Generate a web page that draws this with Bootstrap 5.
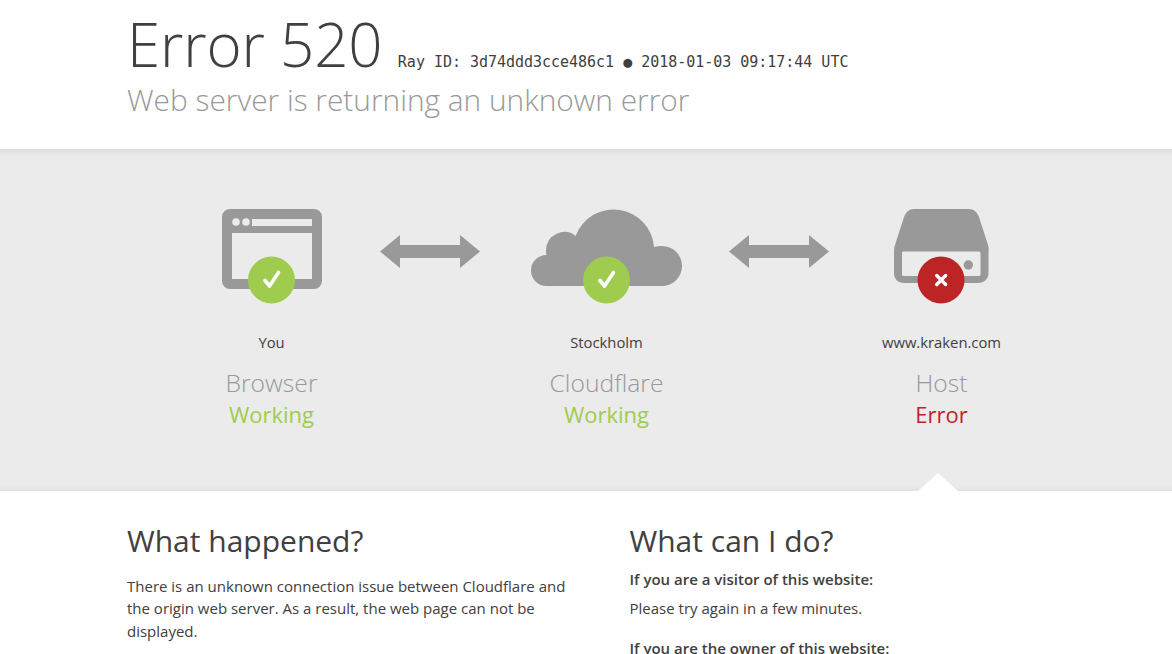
<!DOCTYPE html>
<html lang="en">
<head>
<meta charset="utf-8">
<title>Error 520</title>
<link href="https://cdn.jsdelivr.net/npm/bootstrap@5.3.0/dist/css/bootstrap.min.css" rel="stylesheet">
<style>
html,body{height:654px;overflow:hidden}
body{font-family:"Open Sans",sans-serif;color:#404040;background:#fff}
.page-inner{padding-left:127px}
.top-band{height:149px;padding-top:18.5px}
.err-title{font-size:60px;letter-spacing:-.15px;font-weight:300;line-height:51px;margin:0;color:#404040}
.ray-line{font-family:"DejaVu Sans Mono",monospace;font-size:15px;letter-spacing:-.02px;margin-left:15.5px}
.err-sub{font-size:29.85px;font-weight:300;line-height:23px;margin:0;color:#999}
.gray-band{height:342px;background:#ebebeb;box-shadow:inset 0 8px 6px -6px rgba(0,0,0,.08),inset 0 -8px 6px -6px rgba(0,0,0,.05);position:relative;padding-top:60px}
.icon-row{padding-left:222px;height:123px}
.icon-row svg{display:block;flex:none}
.gap-a{margin-left:58px}.gap-b{margin-left:51px}.gap-c{margin-left:47px}.gap-d{margin-left:65px}
.arrow-shift{margin-top:26px}
.status-cols{padding-left:104px}
.status-col{width:335px;text-align:center}
.place{font-size:14.8px;line-height:20px;margin-bottom:15px}
.kind{font-size:24.7px;font-weight:300;line-height:32px;color:#999}
.state{font-size:22px;line-height:32px;margin-top:-1px}
.ok{color:#9fcc4e}.bad{color:#bd2426}
.notch{position:absolute;left:918px;bottom:0;width:0;height:0;border-left:20px solid transparent;border-right:20px solid transparent;border-bottom:18px solid #fff}
.info-cols{padding-top:30px}
.info-col{width:502.5px}
.info-col.first p{width:440px}
.info-head{font-size:30px;font-weight:400;line-height:40px;margin:0 0 14px}
.info-col p{font-size:15px;line-height:22.4px;margin:0 0 24px}
.info-col p.lbl{font-weight:600;margin-top:-7px;margin-bottom:7px}
</style>
</head>
<body>
<header class="top-band page-inner">
  <h1 class="err-title d-flex align-items-baseline"><span>Error 520</span><span class="ray-line">Ray ID: 3d74ddd3cce486c1 ● 2018-01-03 09:17:44 UTC</span></h1>
  <h2 class="err-sub">Web server is returning an unknown error</h2>
</header>
<section class="gray-band">
  <div class="icon-row d-flex align-items-start">
    <svg width="100" height="104" viewBox="0 0 100 104">
      <path fill="#999" fill-rule="evenodd" d="M8 0H92a8 8 0 0 1 8 8V72a8 8 0 0 1-8 8H8a8 8 0 0 1-8-8V8a8 8 0 0 1 8-8ZM10 24V70H90V24ZM30 10V17H90V10Z"/>
      <circle cx="14" cy="13" r="3.8" fill="#ebebeb"/><circle cx="24" cy="13" r="3.8" fill="#ebebeb"/>
      <circle cx="49.5" cy="71" r="23.5" fill="#9fcc4e"/>
      <path d="M43 71.5l4.500 5.500 9-13.500" fill="none" stroke="#fff" stroke-width="3.600" stroke-linecap="round" stroke-linejoin="round"/>
    </svg>
    <svg class="gap-a arrow-shift" width="100" height="33" viewBox="0 0 100 33"><path fill="#999" d="M0 16.500 20 0V10H80V0L100 16.500 80 33V23H20V33Z"/></svg>
    <svg class="gap-b" width="151" height="104" viewBox="0 0 151 104">
      <path fill="#999" d="M15.500 77A15.500 15.500 0 0 1 15.500 46C15 44 15 43 15 41A18.500 18.500 0 0 1 45 27L45 26A40.500 40.500 0 0 1 123 38C126 37 128 37 131 37A20 20 0 0 1 131 77Z"/>
      <circle cx="75.500" cy="71" r="23.500" fill="#9fcc4e"/>
      <path d="M69 71.500l4.500 5.500 9-13.500" fill="none" stroke="#fff" stroke-width="3.600" stroke-linecap="round" stroke-linejoin="round"/>
    </svg>
    <svg class="gap-c arrow-shift" width="100" height="33" viewBox="0 0 100 33"><path fill="#999" d="M0 16.500 20 0V10H80V0L100 16.500 80 33V23H20V33Z"/></svg>
    <svg class="gap-d" width="95" height="104" viewBox="0 0 95 104">
      <path fill="#999" fill-rule="evenodd" d="M20 0H75C80 0 83 3 85 8L94 36C95 39 94.500 41 94.500 44V64C94.500 70 90 74 84 74H10C4 74 0 70 0 64V44C0 41 0 39 1 36L10 8C12 3 15 0 20 0ZM10 42.500C8.500 42.500 8 43 8 44.500V65C8 66.500 8.500 67 10 67H84.500C86 67 86.500 66.500 86.500 65V44.500C86.500 43 86 42.500 84.500 42.500Z"/>
      <circle cx="74.300" cy="56" r="4.700" fill="#999"/>
      <circle cx="47" cy="71" r="23.500" fill="#bd2426"/>
      <path d="M42.700 66.500 51.700 75.500M51.700 66.500 42.700 75.500" fill="none" stroke="#fff" stroke-width="3.400" stroke-linecap="round"/>
    </svg>
  </div>
  <div class="status-cols d-flex">
    <div class="status-col"><div class="place">You</div><div class="kind">Browser</div><div class="state ok">Working</div></div>
    <div class="status-col"><div class="place">Stockholm</div><div class="kind">Cloudflare</div><div class="state ok">Working</div></div>
    <div class="status-col"><div class="place">www.kraken.com</div><div class="kind">Host</div><div class="state bad">Error</div></div>
  </div>
  <div class="notch"></div>
</section>
<section class="info-cols page-inner d-flex">
  <div class="info-col first">
    <h2 class="info-head">What happened?</h2>
    <p>There is an unknown connection issue between Cloudflare and the origin web server. As a result, the web page can not be displayed.</p>
  </div>
  <div class="info-col">
    <h2 class="info-head">What can I do?</h2>
    <p class="lbl">If you are a visitor of this website:</p>
    <p>Please try again in a few minutes.</p>
    <p class="lbl">If you are the owner of this website:</p>
  </div>
</section>
<script src="https://cdn.jsdelivr.net/npm/bootstrap@5.3.0/dist/js/bootstrap.bundle.min.js"></script>
</body>
</html>
